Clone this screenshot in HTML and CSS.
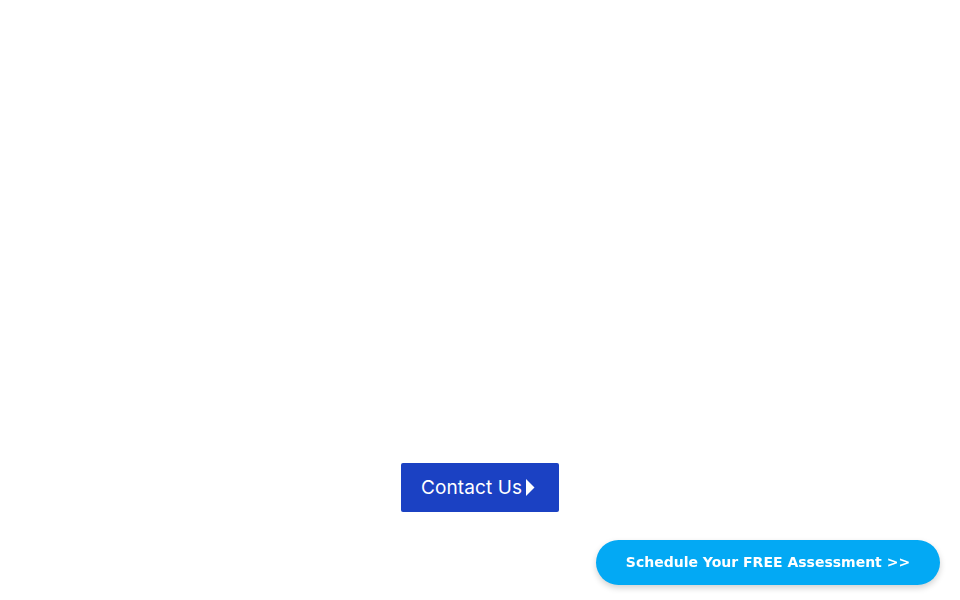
FILE: index.html
```html
<!DOCTYPE html>
<html lang="en">
<head>
<meta charset="utf-8">
<title>Contact</title>
<link rel="stylesheet" href="styles.css">
</head>
<body>
<main class="page">
  <section class="hero"></section>
  <div class="cta-row">
    <a class="contact-btn" href="#">Contact Us<svg class="caret" width="10" height="17" viewBox="0 0 10 17"><path d="M1 0 L9.5 8.5 L1 17 Z" fill="#fff"/></svg></a>
  </div>
</main>
<a class="schedule-btn" href="#">Schedule Your FREE Assessment &gt;&gt;</a>
</body>
</html>
```
FILE: styles.css
```css
html, body {
  margin: 0;
  padding: 0;
  background: #ffffff;
}
.page {
  display: flex;
  flex-direction: column;
  min-height: 600px;
}
.hero {
  height: 463px;
}
.cta-row {
  display: flex;
  justify-content: center;
}
.contact-btn {
  display: flex;
  align-items: center;
  justify-content: flex-start;
  gap: 3px;
  box-sizing: border-box;
  width: 158px;
  height: 49px;
  padding: 0 0 1px 20px;
  background: #1b41c3;
  border-radius: 2px;
  color: #ffffff;
  text-decoration: none;
  font-family: Inter, "Noto Sans", sans-serif;
  font-size: 19px;
  letter-spacing: 0.1px;
  font-weight: 400;
}
.caret {
  display: block;
  flex: none;
}
.schedule-btn {
  position: fixed;
  right: 20px;
  bottom: 15px;
  display: flex;
  align-items: center;
  justify-content: center;
  box-sizing: border-box;
  width: 344px;
  height: 45px;
  padding-bottom: 2px;
  border-radius: 23px;
  background: #03a9f4;
  color: #ffffff;
  text-decoration: none;
  font-family: "DejaVu Sans", sans-serif;
  font-weight: 700;
  font-size: 14px;
  box-shadow: 0 3px 6px rgba(0, 0, 0, 0.18);
}
```
